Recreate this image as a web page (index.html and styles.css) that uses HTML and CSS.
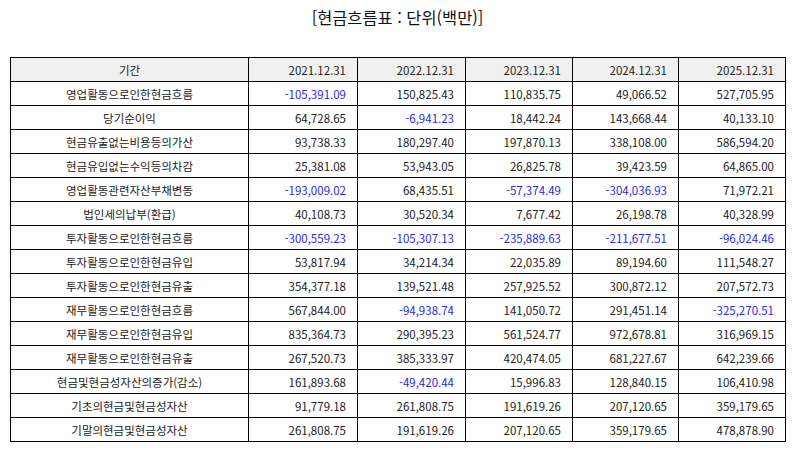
FILE: index.html
```html
<!DOCTYPE html>
<html lang="ko">
<head>
<meta charset="utf-8">
<link rel="stylesheet" href="styles.css">
</head>
<body>
<div class="page">
  <h1 class="title">[현금흐름표 : 단위(백만)]</h1>
  <table class="cf">
    <colgroup>
      <col class="c-label">
      <col class="c-1"><col class="c-2"><col class="c-3"><col class="c-4"><col class="c-5">
    </colgroup>
    <thead>
      <tr><th class="label">기간</th><th>2021.12.31</th><th>2022.12.31</th><th>2023.12.31</th><th>2024.12.31</th><th>2025.12.31</th></tr>
    </thead>
    <tbody>
      <tr><td class="label">영업활동으로인한현금흐름</td><td class="neg">-105,391.09</td><td>150,825.43</td><td>110,835.75</td><td>49,066.52</td><td>527,705.95</td></tr>
      <tr><td class="label">당기순이익</td><td>64,728.65</td><td class="neg">-6,941.23</td><td>18,442.24</td><td>143,668.44</td><td>40,133.10</td></tr>
      <tr><td class="label">현금유출없는비용등의가산</td><td>93,738.33</td><td>180,297.40</td><td>197,870.13</td><td>338,108.00</td><td>586,594.20</td></tr>
      <tr><td class="label">현금유입없는수익등의차감</td><td>25,381.08</td><td>53,943.05</td><td>26,825.78</td><td>39,423.59</td><td>64,865.00</td></tr>
      <tr><td class="label">영업활동관련자산부채변동</td><td class="neg">-193,009.02</td><td>68,435.51</td><td class="neg">-57,374.49</td><td class="neg">-304,036.93</td><td>71,972.21</td></tr>
      <tr><td class="label">법인세의납부(환급)</td><td>40,108.73</td><td>30,520.34</td><td>7,677.42</td><td>26,198.78</td><td>40,328.99</td></tr>
      <tr><td class="label">투자활동으로인한현금흐름</td><td class="neg">-300,559.23</td><td class="neg">-105,307.13</td><td class="neg">-235,889.63</td><td class="neg">-211,677.51</td><td class="neg">-96,024.46</td></tr>
      <tr><td class="label">투자활동으로인한현금유입</td><td>53,817.94</td><td>34,214.34</td><td>22,035.89</td><td>89,194.60</td><td>111,548.27</td></tr>
      <tr><td class="label">투자활동으로인한현금유출</td><td>354,377.18</td><td>139,521.48</td><td>257,925.52</td><td>300,872.12</td><td>207,572.73</td></tr>
      <tr><td class="label">재무활동으로인한현금흐름</td><td>567,844.00</td><td class="neg">-94,938.74</td><td>141,050.72</td><td>291,451.14</td><td class="neg">-325,270.51</td></tr>
      <tr><td class="label">재무활동으로인한현금유입</td><td>835,364.73</td><td>290,395.23</td><td>561,524.77</td><td>972,678.81</td><td>316,969.15</td></tr>
      <tr><td class="label">재무활동으로인한현금유출</td><td>267,520.73</td><td>385,333.97</td><td>420,474.05</td><td>681,227.67</td><td>642,239.66</td></tr>
      <tr><td class="label">현금및현금성자산의증가(감소)</td><td>161,893.68</td><td class="neg">-49,420.44</td><td>15,996.83</td><td>128,840.15</td><td>106,410.98</td></tr>
      <tr><td class="label">기초의현금및현금성자산</td><td>91,779.18</td><td>261,808.75</td><td>191,619.26</td><td>207,120.65</td><td>359,179.65</td></tr>
      <tr><td class="label">기말의현금및현금성자산</td><td>261,808.75</td><td>191,619.26</td><td>207,120.65</td><td>359,179.65</td><td>478,878.90</td></tr>
    </tbody>
  </table>
</div>
</body>
</html>
```
FILE: styles.css
```css
html, body {
  margin: 0;
  padding: 0;
  background: #ffffff;
}
.page {
  width: 794px;
  height: 452px;
  padding: 6px 9px 0 10px;
  box-sizing: border-box;
  font-family: "Noto Sans CJK KR", "Noto Sans", sans-serif;
  color: #222222;
}
.title {
  margin: 0 0 29px 0;
  font-size: 16.4px;
  font-weight: normal;
  line-height: 22px;
  text-align: center;
  color: #111111;
}
.cf {
  width: 775px;
  border-collapse: collapse;
  table-layout: fixed;
  font-size: 11.5px;
}
.c-label { width: 238px; }
.c-1 { width: 109px; }
.c-2 { width: 108px; }
.c-3 { width: 107px; }
.c-4 { width: 106px; }
.c-5 { width: 107px; }
.cf th, .cf td {
  border: 1px solid #000000;
  height: 24px;
  padding: 0 11px 0 4px;
  box-sizing: border-box;
  text-align: right;
  font-weight: normal;
  line-height: 14px;
  white-space: nowrap;
}
.cf th {
  background: #f0f0f0;
}
.cf .label {
  text-align: center;
  padding: 0 4px;
}
.cf .neg {
  color: #2a2ae6;
}
```
